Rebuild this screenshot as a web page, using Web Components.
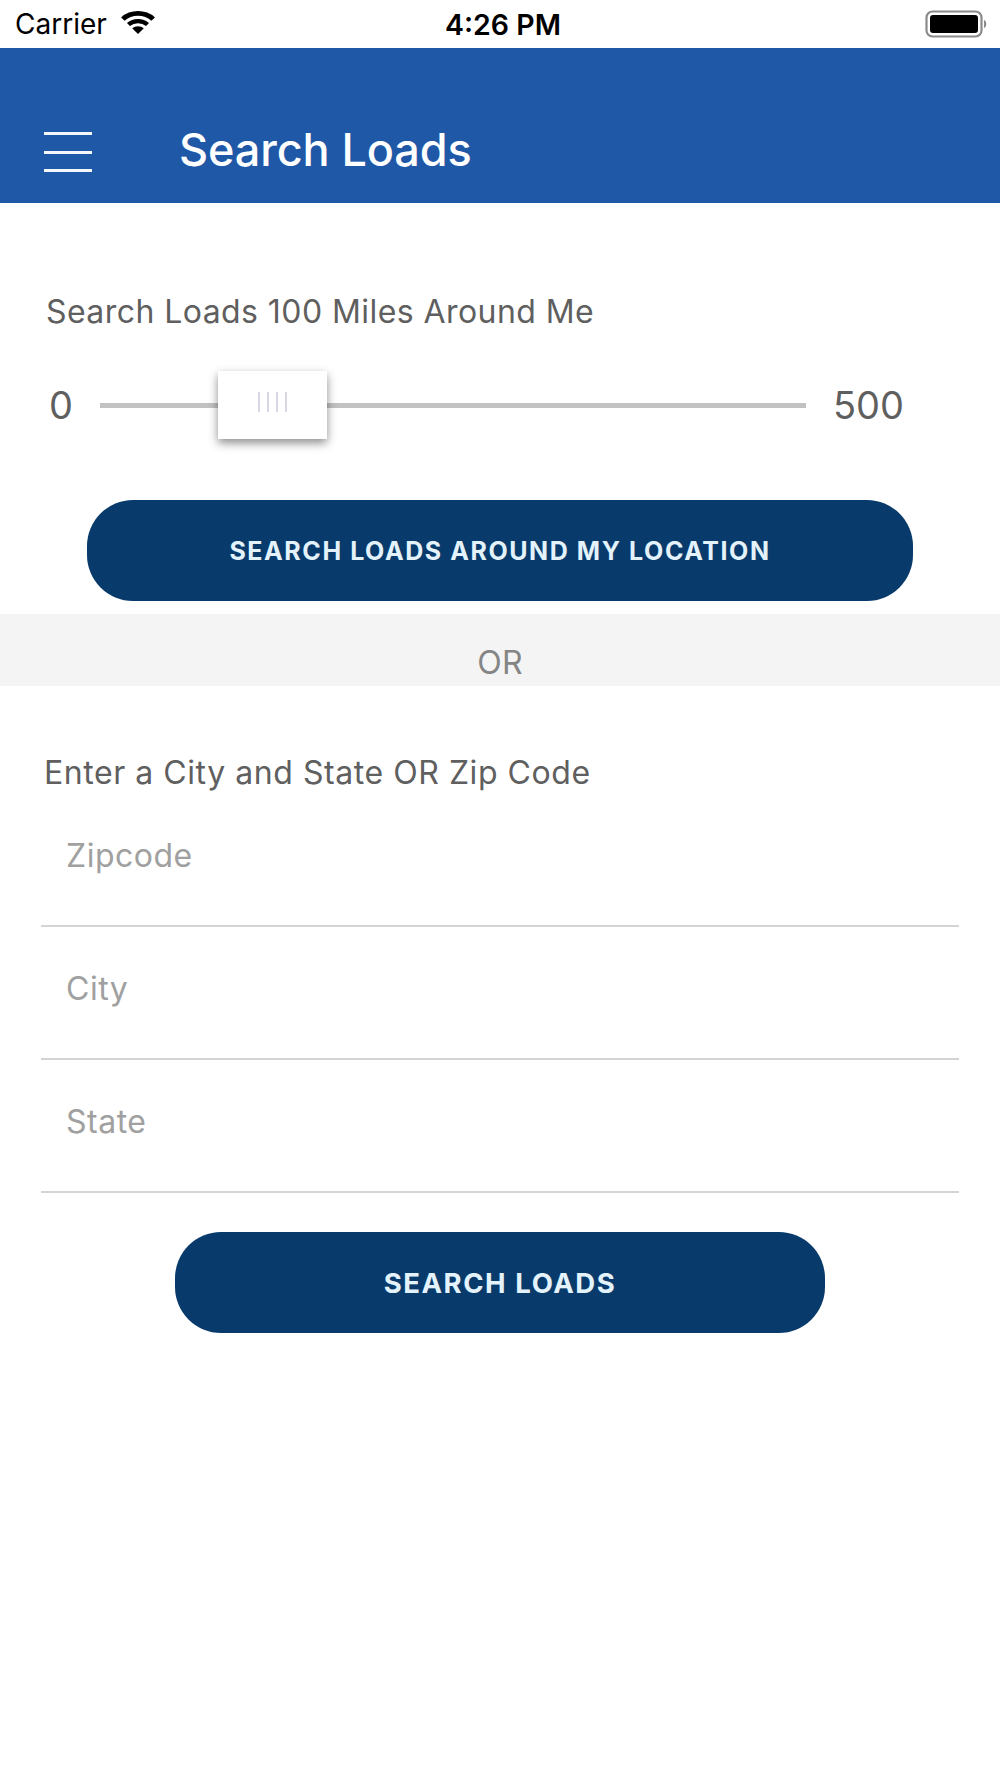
<!DOCTYPE html>
<html>
<head>
<meta charset="utf-8">
<title>Search Loads</title>
<style>
  html, body { margin: 0; background: #fff; }
  body { font-family: Inter, "Liberation Sans", sans-serif; width: 1000px; height: 1778px; overflow: hidden; }
</style>
</head>
<body>
<status-bar></status-bar>
<app-header title="Search Loads"></app-header>
<range-panel label="Search Loads 100 Miles Around Me" min="0" max="500"></range-panel>
<pill-button width="826" top="0" size="25">SEARCH LOADS AROUND MY LOCATION</pill-button>
<or-band>OR</or-band>
<location-form label="Enter a City and State OR Zip Code">
  <text-row>Zipcode</text-row>
  <text-row>City</text-row>
  <text-row>State</text-row>
</location-form>
<pill-button width="650" top="39" size="27.5">SEARCH LOADS</pill-button>

<script>
class StatusBar extends HTMLElement {
  constructor() {
    super();
    this.attachShadow({ mode: 'open' }).innerHTML = `
    <style>
      :host { display: flex; align-items: center; height: 48px; background: #fff; color: #000; position: relative; }
      .carrier { font-size: 28px; margin-left: 15px; }
      svg.wifi { margin-left: 13px; margin-top: -3px; }
      .time { position: absolute; left: 6px; right: 0; text-align: center; font-size: 28.5px; font-weight: 600; }
      svg.batt { position: absolute; left: 925px; top: 10px; }
    </style>
    <span class="carrier">Carrier</span>
    <svg class="wifi" width="36" height="26" viewBox="0 0 34 26" preserveAspectRatio="none">
      <path d="M17 24 L11.5 18.2 A8.5 8.5 0 0 1 22.5 18.2 Z" fill="#000"/>
      <path d="M9.4 16 A11.5 11.5 0 0 1 24.6 16 L27.4 13 A15.5 15.5 0 0 0 6.6 13 Z" fill="#000"/>
      <path d="M4.4 10.8 A18.5 18.5 0 0 1 29.6 10.8 L33 7.4 A23 23 0 0 0 1 7.4 Z" fill="#000"/>
    </svg>
    <span class="time">4:26 PM</span>
    <svg class="batt" width="63" height="28" viewBox="0 0 63 28">
      <rect x="1.5" y="1.5" width="55" height="25" rx="6" fill="none" stroke="#8a8a8a" stroke-width="2.2"/>
      <rect x="5" y="5" width="48" height="18" rx="3" fill="#000"/>
      <path d="M59 10 C62 11 62 17 59 18 Z" fill="#8a8a8a"/>
    </svg>`;
  }
}
customElements.define("status-bar", StatusBar);

class AppHeader extends HTMLElement {
  constructor() {
    super();
    this.attachShadow({ mode: 'open' }).innerHTML = `
    <style>
      :host { display: flex; align-items: flex-end; height: 155px; background: #2058a8; color: #fff; box-sizing: border-box; padding: 0 0 27px 44px; }
      .menu { display: flex; flex-direction: column; justify-content: space-between; width: 48px; height: 40px; margin-right: 87px; margin-bottom: 4px; }
      .menu i { display: block; height: 3px; background: #f4f7fb; }
      .title { font-size: 45px; font-weight: 500; line-height: 52px; letter-spacing: -.1px; }
    </style>
    <div class="menu"><i></i><i></i><i></i></div>
    <div class="title" id="t"></div>`;
  }
  connectedCallback() { this.shadowRoot.querySelector("#t").innerText = this.getAttribute("title"); }
}
customElements.define("app-header", AppHeader);

class RangePanel extends HTMLElement {
  constructor() {
    super();
    this.attachShadow({ mode: 'open' }).innerHTML = `
    <style>
      :host { display: block; padding: 90px 0 0 46px; color: #5f5f5f; height: 297px; box-sizing: border-box; }
      .label { font-size: 32px; line-height: 38px; letter-spacing: .43px; }
      .row { display: flex; align-items: center; margin-top: 40px; height: 68px; }
      .end { font-size: 38px; }
      #min { width: 51px; margin-left: 3px; }
      .track { position: relative; width: 706px; height: 5px; background: #c2c2c2; margin-right: 27px; }
      .thumb { position: absolute; left: 118px; top: -32px; width: 109px; height: 68px; background: #fff; box-shadow: 0 4px 9px rgba(0,0,0,.45); display: flex; gap: 7px; justify-content: center; align-items: center; padding-bottom: 5px; box-sizing: border-box; }
      .thumb i { display: block; width: 2px; height: 20px; background: #d8d8e4; }
    </style>
    <div class="label" id="label"></div>
    <div class="row">
      <span class="end" id="min"></span>
      <div class="track"><div class="thumb"><i></i><i></i><i></i><i></i></div></div>
      <span class="end" id="max"></span>
    </div>`;
  }
  connectedCallback() {
    const s = this.shadowRoot;
    s.querySelector("#label").innerText = this.getAttribute("label");
    s.querySelector("#min").innerText = this.getAttribute("min");
    s.querySelector("#max").innerText = this.getAttribute("max");
  }
}
customElements.define("range-panel", RangePanel);

class PillButton extends HTMLElement {
  constructor() {
    super();
    this.attachShadow({ mode: 'open' }).innerHTML = `
    <style>
      :host { display: flex; justify-content: center; }
      .btn { display: flex; align-items: center; justify-content: center; height: 101px; border-radius: 46px; background: #083b6b; color: #e4f3fb; font-weight: 700; letter-spacing: 1.57px; }
    </style>
    <div class="btn"><slot></slot></div>`;
  }
  connectedCallback() {
    const btn = this.shadowRoot.querySelector(".btn");
    btn.style.width = this.getAttribute("width") + "px";
    btn.style.fontSize = this.getAttribute("size") + "px";
    this.style.marginTop = this.getAttribute("top") + "px";
  }
}
customElements.define("pill-button", PillButton);

class OrBand extends HTMLElement {
  constructor() {
    super();
    this.attachShadow({ mode: 'open' }).innerHTML = `
    <style>
      :host { display: flex; justify-content: center; align-items: center; height: 72px; margin-top: 13px; background: #f4f4f4; color: #858585; font-size: 32px; letter-spacing: .3px; padding-top: 24px; box-sizing: border-box; }
    </style>
    <slot></slot>`;
  }
}
customElements.define("or-band", OrBand);

class LocationForm extends HTMLElement {
  constructor() {
    super();
    this.attachShadow({ mode: 'open' }).innerHTML = `
    <style>
      :host { display: block; padding: 68px 41px 0; color: #5f5f5f; }
      .label { font-size: 32px; line-height: 38px; letter-spacing: .55px; margin-left: 3px; margin-bottom: 2px; }
    </style>
    <div class="label" id="label"></div>
    <slot></slot>`;
  }
  connectedCallback() { this.shadowRoot.querySelector("#label").innerText = this.getAttribute("label"); }
}
customElements.define("location-form", LocationForm);

class TextRow extends HTMLElement {
  constructor() {
    super();
    this.attachShadow({ mode: 'open' }).innerHTML = `
    <style>
      :host { display: block; height: 133px; box-sizing: border-box; border-bottom: 2.5px solid #d4d4d4; padding: 43px 0 0 25px; color: #a0a0a0; font-size: 32px; letter-spacing: .5px; line-height: 38px; }
    </style>
    <slot></slot>`;
  }
}
customElements.define("text-row", TextRow);
</script>
</body>
</html>
